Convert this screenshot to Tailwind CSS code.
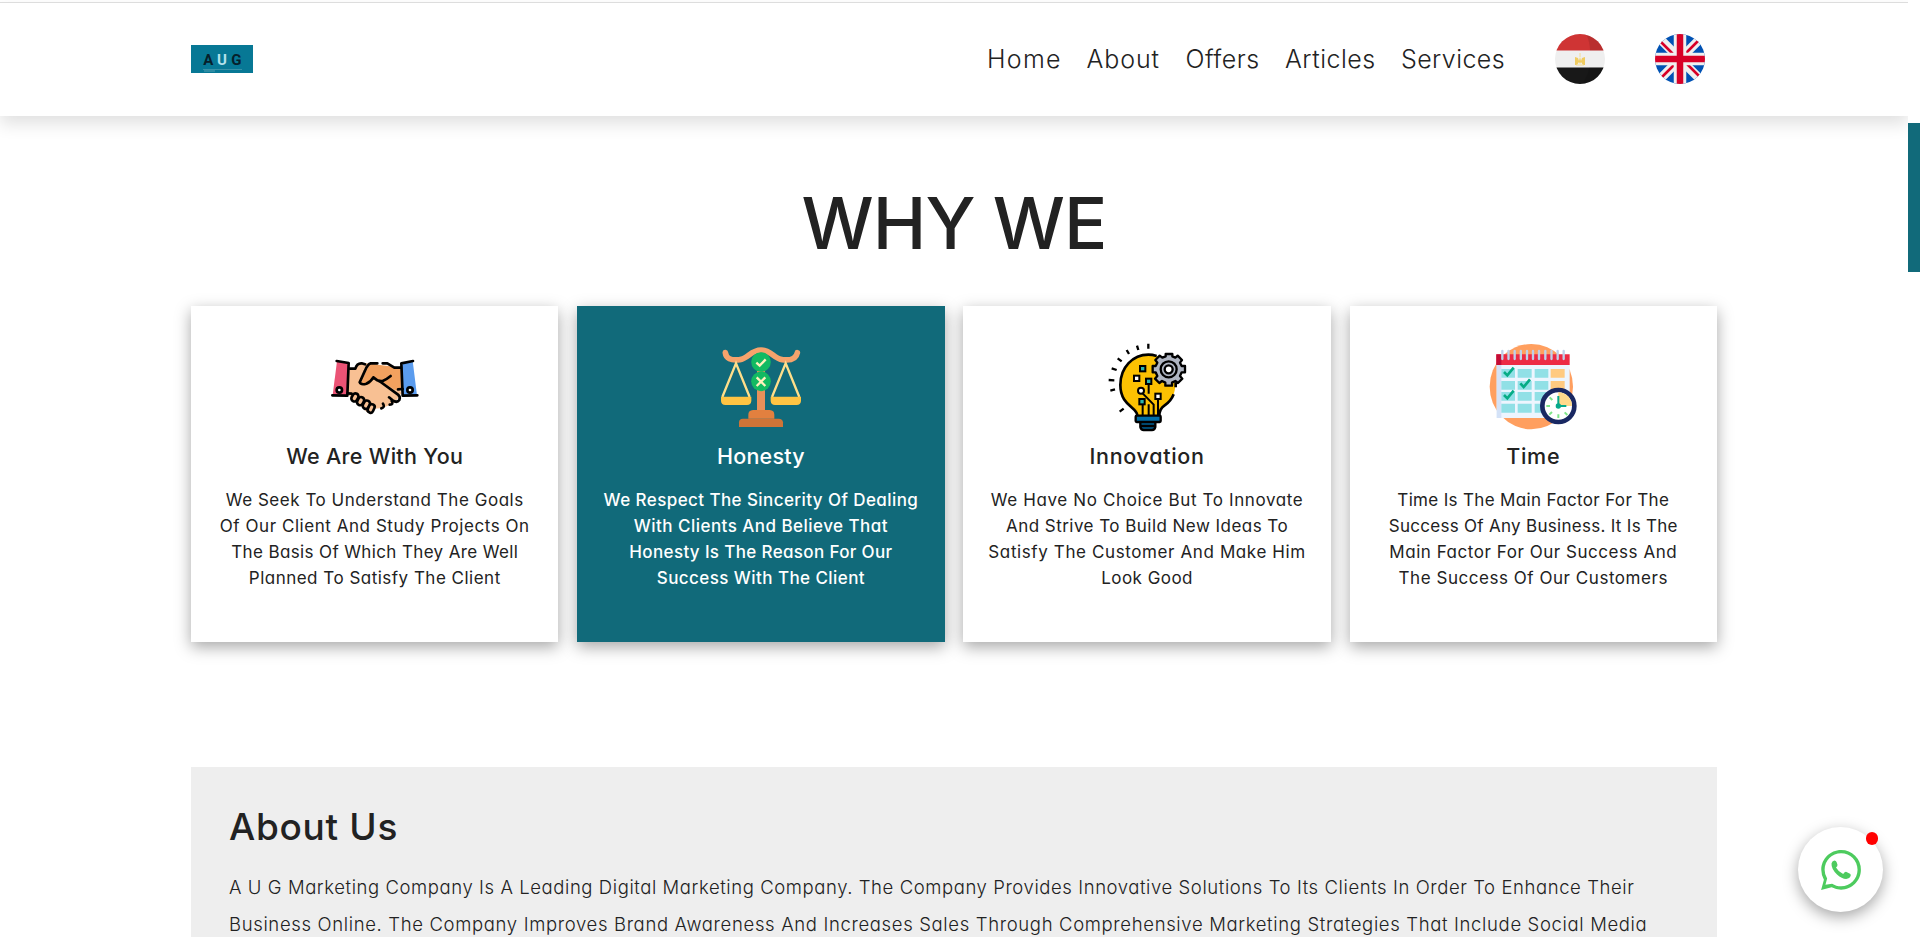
<!DOCTYPE html>
<html lang="en">
<head>
<meta charset="utf-8">
<title>AUG</title>
<script src="https://cdn.jsdelivr.net/npm/@tailwindcss/browser@4"></script>
</head>
<body class="h-[937px] overflow-hidden bg-white font-['Inter',sans-serif] text-[#222] [font-feature-settings:'cv11']">
<div class="flex h-[937px]">
<div class="h-full w-[1908px] shrink-0 overflow-hidden pt-0.5">
  <header class="h-[114px] border-t border-[#ddd] shadow-[0_8px_16px_rgba(0,0,0,0.12)]">
    <div class="mx-auto flex h-[112px] w-[1526px] items-center">
      <svg class="h-7 w-[62px]" viewBox="0 0 62 28"><rect width="62" height="28" fill="#077895"/><g font-family="Roboto, sans-serif" font-weight="700" font-size="15" text-anchor="middle"><text x="17.3" y="20" fill="#06202b">A</text><text x="31" y="20" fill="#b5e2ec">U</text><text x="45.3" y="20" fill="#06202b">G</text></g><path d="M12 24.5h39" stroke="#3991a7"/><path d="M13 26h11" stroke="#65a9b9" stroke-width=".8"/></svg>
      <nav class="ml-auto flex text-[25px] leading-7 font-[330] whitespace-nowrap">
        <a class="w-[99.5px] tracking-[1.3px]">Home</a><a class="w-[99px] tracking-[0.9px]">About</a><a class="w-[99.5px] tracking-[0.5px]">Offers</a><a class="w-[116px] tracking-[0.5px]">Articles</a><a class="w-[154px] tracking-[0.4px]">Services</a>
      </nav>
      <svg class="mr-[50px] size-[50px]" viewBox="0 0 50 50"><clipPath id="r"><circle cx="25" cy="25" r="25"/></clipPath><g clip-path="url(#r)"><rect width="50" height="50" fill="#efefef"/><rect width="50" height="16.5" fill="#cf3434"/><rect y="33.5" width="50" height="17" fill="#181818"/><path d="M31 0q4 8 4 16.500h15V0zM34 33.500q-1 9-7 16.500h23V33.500z" fill="#000" opacity=".1"/></g><path d="M20 23l3 1 1 3 1-4 1 4 1-3 3-1v8h-2l-2-3-1 2-1-2-2 3h-2z" fill="#f0cc60"/><path d="M25 19v4M21 31h8" stroke="#f4dc95"/></svg>
      <svg class="mr-3 size-[50px]" viewBox="0 0 50 50"><g clip-path="url(#r)"><rect width="50" height="50" fill="#0052b4"/><path d="M0 0l50 50M50 0L0 50" stroke="#f0f0f0" stroke-width="9"/><path d="M5 7l14 14M31 19L45 5M19 31L5 45M31 29l14 14" stroke="#d80027" stroke-width="2.600"/><path d="M25 0v50M0 25h50" stroke="#f0f0f0" stroke-width="12.500"/><path d="M25 0v50M0 25h50" stroke="#d80027" stroke-width="6.500"/></g></svg>
    </div>
  </header>
  <main class="mx-auto w-[1526px] pt-[71px]">
    <h1 class="mb-[47px] h-[72px] text-center text-[72px] leading-[72px] font-medium tracking-[-1px] whitespace-nowrap">WHY WE</h1>
    <section class="grid grid-cols-4 gap-[18.7px] text-center text-[17px] leading-[26.3px] whitespace-nowrap">
      <article class="flex h-[336px] flex-col items-center bg-white pt-[29px] font-[370] shadow-[0_5px_15px_rgba(0,0,0,0.35)]">
        <svg class="h-[100px] w-[110px]" viewBox="-1 -15 330 300" fill="none" stroke="#000" stroke-width="8" stroke-linecap="round" stroke-linejoin="round">
          <path d="M87 84h18l14-14 40 0 60 20 24 70-20 28-36 16-25 2-15 12-50-40-15-16z" fill="#f8c093" stroke="none"/>
          <path d="M148 71l80 10 16 5v62l-20 2-60-38-15 20q-20 8-28 0z" fill="#f2a15f" stroke="none"/>
          <path d="M92 171l17-11 50 42-5 18-12-2z" fill="#f8c093" stroke="none"/>
          <path d="M50 63l35 6-4 98-44-1z" fill="#eb5375" stroke="none"/><path d="M277 63l-34 7 4 97 43-1z" fill="#5b9cee" stroke="none"/>
          <path d="M49 63l36 6-4 98-45-1M278 63l-35 7 4 97 44-1"/><circle cx="57" cy="150" r="8" fill="#fff"/><circle cx="269" cy="150" r="8" fill="#fff"/>
          <path d="M88 86h17q5-17 19-16l10 3M171 70h-20q-9 2-17 22l-16 35q4 9 20 4 14-6 21-19 14 14 28 11 12-5 24-15M159 112q13 11 22 14l52 38q8 6 4 16-7 10-20 1l-11-9M187 70h14l21 13h20M247 147l-14 1M82 160l12 1"/>
          <path d="M183 205q12-3 5-14M208 194q13-1 6-11"/>
          <rect x="95" y="160" width="18" height="25" rx="9" transform="rotate(28 104 172)" fill="#f8c093"/><rect x="112" y="171" width="18" height="25" rx="9" transform="rotate(28 121 183)" fill="#f8c093"/><rect x="129" y="181" width="18" height="26" rx="9" transform="rotate(28 138 194)" fill="#f8c093"/><rect x="144" y="192" width="17" height="26" rx="8" transform="rotate(24 152 205)" fill="#f8c093"/>
        </svg>
        <h2 class="mt-[8.5px] mb-[19px] text-[21.5px] leading-6 font-[470] tracking-[0.3px]">We Are With You</h2>
        <p><span class="tracking-[0.53px]">We Seek To Understand The Goals</span><br><span class="tracking-[0.55px]">Of Our Client And Study Projects On</span><br><span class="tracking-[0.37px]">The Basis Of Which They Are Well</span><br><span class="tracking-[0.49px]">Planned To Satisfy The Client</span></p>
      </article>
      <article class="flex h-[336px] flex-col items-center bg-[#116a7a] pt-[29px] font-medium text-white shadow-[0_5px_15px_rgba(0,0,0,0.35)]">
        <svg class="h-[100px] w-[110px]" viewBox="3 0 330 300">
          <path d="M156 100h24v130h-24z" fill="#e8905a"/><path d="M102 276v-14q0-11 12-11h107q12 0 13 11v14z" fill="#cf7437"/><path d="M130 251v-12q0-13 14-14h50q14 1 14 14v12z" fill="#e2803f"/>
          <path d="M61 53q3 26 43 21c26-4 34-29 64-29s38 25 64 29q40 5 45-21" fill="none" stroke="#f6a36c" stroke-width="17" stroke-linecap="round"/>
          <path d="M52 186l41-101 41 101M201 186l41-101 41 101" fill="none" stroke="#ffdf8a" stroke-width="7"/>
          <path d="M48 185h91v13q-1 12-13 12H61q-12 0-13-12zM197 185h91v13q-1 12-13 12h-65q-12 0-13-12z" fill="#ffc443"/>
          <circle cx="168" cy="81" r="29.500" fill="#12ba62"/><circle cx="168" cy="139" r="29.500" fill="#12ba62"/>
          <path d="M154 83l10 9 18-19M155 127l26 26M181 127l-26 26" fill="none" stroke="#fff1bd" stroke-width="7"/>
        </svg>
        <h2 class="mt-[8.5px] mb-[19px] text-[21.5px] leading-6 tracking-[0.25px]">Honesty</h2>
        <p><span class="tracking-[0.42px]">We Respect The Sincerity Of Dealing</span><br><span class="tracking-[0.46px]">With Clients And Believe That</span><br><span class="tracking-[0.35px]">Honesty Is The Reason For Our</span><br><span class="tracking-[0.43px]">Success With The Client</span></p>
      </article>
      <article class="flex h-[336px] flex-col items-center bg-white pt-[29px] font-[370] shadow-[0_5px_15px_rgba(0,0,0,0.35)]">
        <svg class="h-[100px] w-[110px]" viewBox="-9 0 330 300" fill="none" stroke="#000" stroke-width="7">
          <path d="M127 240c0-22-51-31-51-90 0-53 38-91 84-91 49 0 81 39 81 88 0 59-46 66-49 93z" fill="#fcc102" stroke="none"/><path d="M80 165q10 45 48 60l2 15-4-18q-50-26-46-57z" fill="#f0a400" stroke="none"/>
          <path d="M127 241c0-24-51-29-51-91 0-53 38-91 84-91q12 0 25 4M242 142v15M236 178q-8 21-28 34-14 9-15 29" stroke-width="8"/>
          <path d="M160 26v15M126 32l4 13M95 45l7 12M68 70l12 9M50 100l15 5M41 135l17 1M46 167l14-4M74 230l12-9"/>
          <path d="M143 242v-32M161 148v28M161 242v-34M176 242v-33l-33-34M189 191v51" stroke-width="6"/>
          <g fill="#2cb5ae" stroke-width="6"><rect x="135" y="93" width="16" height="16"/><rect x="153" y="131" width="16" height="16"/><rect x="133" y="192" width="16" height="16"/></g><g fill="#fff" stroke-width="6"><rect x="117" y="122" width="16" height="16"/><rect x="181" y="176" width="16" height="16"/><circle cx="138" cy="167" r="9"/></g>
          <path d="M136 259h45v17q-2 9-10 9h-25q-8 0-10-9zM135 273h47" fill="#006095"/><rect x="122" y="242" width="75" height="19" rx="3" fill="#006ea8"/>
          <path d="M212 64v-7h20v7l9 4 7-6 13 13-6 8 5 10h10v19h-10l-5 11 7 8-13 13-8-6-10 5v9h-20v-9l-10-5-8 6-13-13 7-8-5-11h-9V93h9l5-10-6-8 13-13 8 6z" fill="#afb5c2" stroke-linejoin="round"/><circle cx="221" cy="103" r="24" fill="#afb5c2"/><circle cx="221" cy="103" r="12" fill="#fff"/>
        </svg>
        <h2 class="mt-[8.5px] mb-[19px] text-[21.5px] leading-6 font-[470] tracking-[0.7px]">Innovation</h2>
        <p><span class="tracking-[0.62px]">We Have No Choice But To Innovate</span><br><span class="tracking-[0.46px]">And Strive To Build New Ideas To</span><br><span class="tracking-[0.61px]">Satisfy The Customer And Make Him</span><br><span class="tracking-[0.45px]">Look Good</span></p>
      </article>
      <article class="flex h-[336px] flex-col items-center bg-white pt-[29px] font-[370] shadow-[0_5px_15px_rgba(0,0,0,0.35)]">
        <svg class="h-[100px] w-[110px]" viewBox="-5 0 330 300">
          <ellipse cx="155" cy="155" rx="125" ry="128" fill="#ff9f5f"/><path d="M51 88h219v161H51z" fill="#edf5fe"/><path d="M51 88h14v161H51z" fill="#d4e2f7"/><path d="M50 58h220v32H50z" fill="#ed2b45"/><path d="M50 58h15v32H50z" fill="#c40d36"/>
          <path d="M68 48v24M86.500 48v24M105 48v24M123.500 48v24M142 48v24M160 48v24M178 48v24M197 48v24M215.500 48v24M234 48v24M252 48v24" stroke="#bfd0ea" stroke-width="7" stroke-linecap="round"/>
          <path d="M65 102h41v26H65zM114 102h42v26h-42zM165 102h41v26h-41zM65 138h41v26H65zM114 138h42v26h-42zM165 138h41v26h-41zM65 171h41v26H65zM114 171h42v26h-42zM165 171h41v26h-41zM65 206h41v27H65zM114 206h42v27h-42zM165 206h41v27h-41z" fill="#91e0e6"/><path d="M213 102h42v26h-42zM213 138h42v26h-42z" fill="#ffca80"/>
          <path d="M73 111l10 10 19-23M122 145l10 11 19-23M73 180l10 10 19-23" fill="none" stroke="#06ac85" stroke-width="8"/>
          <circle cx="236" cy="213" r="48" fill="#fff" stroke="#192862" stroke-width="14"/><path d="M236 213v-41a41 41 0 0 1 41 41z" fill="#ffda8b"/><path d="M236 183v30h24" fill="none" stroke="#06a98b" stroke-width="6"/><circle cx="236" cy="213" r="8" fill="#06a98b"/><path d="M200 213h11M236 238v11M210 187l8 8M217 231l-8 8M255 232l8 8" stroke="#7ee588" stroke-width="6"/>
        </svg>
        <h2 class="mt-[8.5px] mb-[19px] text-[21.5px] leading-6 font-[470] tracking-[0.7px]">Time</h2>
        <p><span class="tracking-[0.34px]">Time Is The Main Factor For The</span><br><span class="tracking-[0.29px]">Success Of Any Business. It Is The</span><br><span class="tracking-[0.54px]">Main Factor For Our Success And</span><br><span class="tracking-[0.54px]">The Success Of Our Customers</span></p>
      </article>
    </section>
    <section class="mt-[125px] h-[400px] bg-[#eee] px-[38px] pt-[38px] whitespace-nowrap">
      <h2 class="text-[37px] leading-[44px] font-[470] tracking-[0.7px]">About Us</h2>
      <p class="mt-5 text-[18.5px] leading-[37px] font-[340]"><span class="tracking-[0.58px]">A U G Marketing Company Is A Leading Digital Marketing Company. The Company Provides Innovative Solutions To Its Clients In Order To Enhance Their</span><br><span class="tracking-[0.65px]">Business Online. The Company Improves Brand Awareness And Increases Sales Through Comprehensive Marketing Strategies That Include Social Media</span></p>
    </section>
  </main>
</div>
<div class="mt-[123px] h-[149px] w-3 bg-[#116a7a]"></div>
</div>
<a class="fixed top-[827px] left-[1798px] flex size-[85px] items-center justify-center rounded-full bg-white shadow-[0_5px_15px_rgba(0,0,0,0.35)]">
  <svg class="size-10" viewBox="0 0 24 24" fill="#4dcb5e"><path d="M.057 24l1.687-6.163A11.867 11.867 0 0 1 .157 11.892C.16 5.335 5.495 0 12.050 0a11.817 11.817 0 0 1 8.413 3.488 11.824 11.824 0 0 1 3.480 8.414c-.003 6.557-5.338 11.892-11.893 11.892a11.900 11.900 0 0 1-5.688-1.448L.057 24zm6.597-3.807c1.676.995 3.276 1.591 5.392 1.592 5.448 0 9.886-4.434 9.889-9.885.002-5.462-4.415-9.890-9.881-9.892-5.452 0-9.887 4.434-9.889 9.884a9.820 9.820 0 0 0 1.510 5.260l-.999 3.648 3.978-.607z"/><path d="M6.300 8.100q.3-1.500 1.700-1.800 1.100 0 1.400 1l.5 1.500q.1.800-.9 1.700 1.500 2.700 4.300 3.900 1.200-1.600 2-1.200l2.100 1q.7.500.4 1.300-.5 1.700-2.700 1.900-2.600-.1-5.500-2.700-3.500-3.400-3.300-6.600z"/></svg>
  <span class="absolute top-[5px] left-[68px] h-[13px] w-3 rounded-full bg-[#f00]"></span>
</a>
</body>
</html>
